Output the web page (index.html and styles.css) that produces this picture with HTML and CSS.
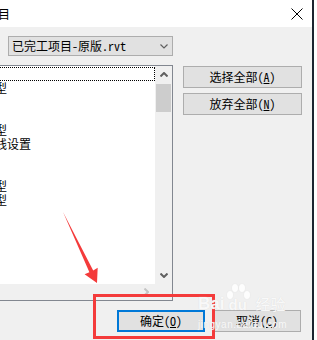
FILE: index.html
```html
<!DOCTYPE html>
<html>
<head>
    <title>选择项目</title>
    <link rel="stylesheet" href="styles.css">
</head>
<body>
    <div class="window">
        <div class="titlebar">
            <span class="title">目</span>
            <svg class="close" width="12" height="12" viewBox="0 0 12 12">
                <path d="M0.5 0.5 L11.5 11.5 M11.5 0.5 L0.5 11.5" stroke="#000" stroke-width="1" fill="none"/>
            </svg>
        </div>

        <div class="content">
            <div class="left">
                <div class="combo">
                    <span class="combo-text">已完工项目-原版.rvt</span>
                    <svg width="8" height="5" viewBox="0 0 8 5">
                        <path d="M0.5 0.5 L4 4 L7.5 0.5" stroke="#606060" stroke-width="1.2" fill="none"/>
                    </svg>
                </div>

                <div class="listbox">
                    <div class="items">
                        <div class="row focus"></div>
                        <div class="row"><span>型</span></div>
                        <div class="row"></div>
                        <div class="row"></div>
                        <div class="row"><span>型</span></div>
                        <div class="row"><span>线设置</span></div>
                        <div class="row"></div>
                        <div class="row"></div>
                        <div class="row"><span>型</span></div>
                        <div class="row"><span>型</span></div>
                    </div>
                    <div class="vscroll">
                        <div class="sbtn">
                            <svg width="8" height="5" viewBox="0 0 8 5">
                                <path d="M0.5 4.5 L4 1 L7.5 4.5" stroke="#606060" stroke-width="2" fill="none"/>
                            </svg>
                        </div>
                        <div class="thumb"></div>
                        <div class="track"></div>
                        <div class="sbtn">
                            <svg width="8" height="5" viewBox="0 0 8 5">
                                <path d="M0.5 0.5 L4 4 L7.5 0.5" stroke="#606060" stroke-width="2" fill="none"/>
                            </svg>
                        </div>
                    </div>
                    <div class="hscroll">
                        <div class="hbtn">
                            <svg width="5" height="8" viewBox="0 0 5 8">
                                <path d="M0.5 0.5 L4 4 L0.5 7.5" stroke="#c4c4c4" stroke-width="2" fill="none"/>
                            </svg>
                        </div>
                    </div>
                    <div class="corner"></div>
                </div>
            </div>

            <div class="right">
                <button class="btn wide">选择全部(<u>A</u>)</button>
                <button class="btn wide">放弃全部(<u>N</u>)</button>
            </div>
        </div>

        <div class="footer">
            <button class="btn default">确定(<u>O</u>)</button>
            <button class="btn">取消(<u>C</u>)</button>
        </div>

        <!-- annotation drawn over the dialog -->
        <svg class="annot" width="317" height="340" viewBox="0 0 317 340">
            <polygon points="63,212 93.2,270.4 97.7,267.8 97,283 84.6,274.3 89.4,272.2" fill="#f43b3b"/>
            <rect x="94.5" y="295.5" width="119" height="42" fill="none" stroke="#f43b3b" stroke-width="3"/>
        </svg>

        <div class="watermark">
            <div class="wm-top">
                <span class="wm-bai">Bai</span>
                <span class="wm-paw">
                    <i class="toe t1"></i><i class="toe t2"></i><i class="toe t3"></i><i class="toe t4"></i>
                    <span class="wm-du">du</span>
                </span>
                <span class="wm-jy">经验</span>
            </div>
            <div class="wm-url">jingyan.baidu.com</div>
        </div>
    </div>
</body>
</html>
```

FILE: styles.css
```css
body {
    margin: 0;
    background: #fff;
    font-family: "Noto Sans Mono CJK SC", "Noto Sans CJK SC", sans-serif;
    font-size: 12px;
    color: #000;
}

.window {
    position: relative;
    width: 312px;
    height: 340px;
    background: #f0f0f0;
    border-right: 2px solid #1c2430;
    overflow: hidden;
}

.titlebar {
    height: 27px;
    background: #fff;
    display: flex;
    align-items: center;
    justify-content: space-between;
    padding-right: 9px;
}

.title {
    font-family: "Noto Sans CJK SC", sans-serif;
    font-size: 12px;
    margin-left: -2px;
}

.close {
    display: block;
}

.content {
    display: flex;
    padding-top: 9px;
}

.left {
    width: 173px;
}

.combo {
    box-sizing: border-box;
    margin-left: 8px;
    width: 165px;
    height: 20px;
    background: #e1e1e1;
    border: 1px solid #adadad;
    display: flex;
    align-items: center;
    justify-content: space-between;
    padding: 0 4px 0 3px;
    line-height: 18px;
    white-space: nowrap;
}

.combo svg {
    display: block;
}

.listbox {
    box-sizing: border-box;
    margin-top: 9px;
    width: 173px;
    height: 236px;
    border: 1px solid #828790;
    border-left: none;
    display: grid;
    grid-template-columns: 155px 17px;
    grid-template-rows: 218px 16px;
    overflow: hidden;
}

.items {
    background: #fff;
    padding-top: 1px;
    overflow: hidden;
}

.row {
    height: 14px;
    line-height: 14px;
    white-space: nowrap;
}

.row span {
    display: inline-block;
    margin-left: -5px;
}

.row.focus {
    box-sizing: border-box;
    margin-left: -2px;
    width: 157px;
    border: 1px dotted #000;
}

.vscroll {
    background: #f0f0f0;
    display: flex;
    flex-direction: column;
}

.sbtn {
    height: 17px;
    display: flex;
    align-items: center;
    justify-content: center;
}

.sbtn svg {
    display: block;
}

.thumb {
    margin: 1px 1px 0 1px;
    height: 28px;
    background: #cdcdcd;
}

.track {
    flex: 1;
}

.hscroll {
    background: #f0f0f0;
    display: flex;
    justify-content: flex-end;
}

.hbtn {
    width: 17px;
    display: flex;
    align-items: center;
    justify-content: center;
}

.hbtn svg {
    display: block;
}

.corner {
    background: #f0f0f0;
}

.right {
    margin-left: 10px;
    margin-top: 30px;
    display: flex;
    flex-direction: column;
    gap: 5px;
}

.btn {
    box-sizing: border-box;
    width: 88px;
    height: 22px;
    padding: 0;
    background: #e1e1e1;
    border: 1px solid #adadad;
    font-family: inherit;
    font-size: 12px;
    color: #000;
    line-height: 18px;
}

.btn.wide {
    width: 119px;
}

.btn.default {
    border: 2px solid #0078d7;
}

.footer {
    display: flex;
    justify-content: flex-end;
    gap: 8px;
    margin-top: 9px;
    padding-right: 11px;
}

.annot {
    position: absolute;
    left: 0;
    top: 0;
    pointer-events: none;
}

/* faint site watermark */
.watermark {
    position: absolute;
    left: 198px;
    top: 281px;
    color: rgba(255, 255, 255, 0.85);
    text-shadow: 0 0 1px #d6d6d6;
    font-family: "Liberation Sans", sans-serif;
    pointer-events: none;
}

.wm-top {
    display: flex;
    align-items: flex-end;
    gap: 1px;
}

.wm-bai {
    font-size: 17px;
    font-weight: bold;
    line-height: 18px;
}

.wm-paw {
    position: relative;
    width: 26px;
    height: 32px;
}

.toe {
    position: absolute;
    width: 6px;
    height: 8px;
    border-radius: 50%;
    background: rgba(255, 255, 255, 0.85);
    box-shadow: 0 0 1px #d6d6d6;
}

.t1 { left: 2px; top: 10px; }
.t2 { left: 7px; top: 3px; }
.t3 { left: 14px; top: 3px; }
.t4 { left: 19px; top: 10px; }

.wm-du {
    position: absolute;
    left: 3px;
    bottom: 0;
    font-size: 15px;
    font-weight: bold;
    line-height: 16px;
}

.wm-jy {
    font-family: "Noto Sans CJK SC", sans-serif;
    font-size: 15px;
    line-height: 18px;
    margin-left: 3px;
}

.wm-url {
    font-size: 10px;
    margin-top: 6px;
    letter-spacing: 0.5px;
}
```
